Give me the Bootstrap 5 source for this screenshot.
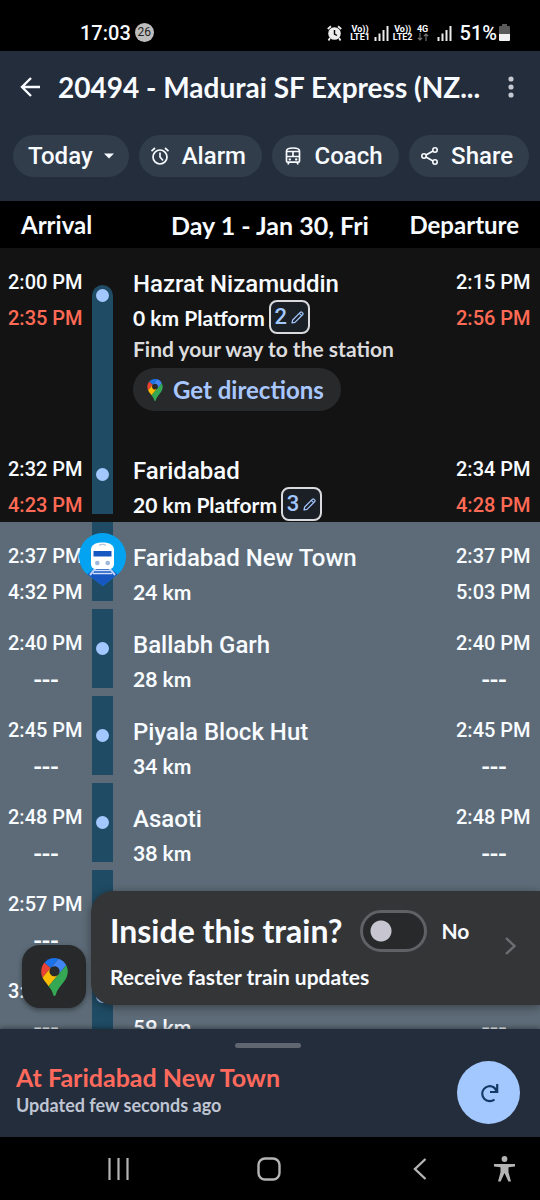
<!DOCTYPE html>
<html lang="en">
<head>
<meta charset="utf-8">
<meta name="viewport" content="width=device-width, initial-scale=1">
<title>20494 - Madurai SF Express</title>
<link href="https://cdn.jsdelivr.net/npm/bootstrap@5.3.0/dist/css/bootstrap.min.css" rel="stylesheet">
<style>
  :root { --f-round: Lato, "Open Sans", sans-serif; --f-flat: Roboto, "Noto Sans", sans-serif; }
  body { background: #000; color: #f8fbff; font-family: var(--f-flat); font-weight: 500; }
  svg { display: block; flex: none; }
  button { font-family: inherit; }

  .status-bar { height: 51px; padding: 14px 30px 0 80px; font-size: 20px; line-height: 36px; }
  .notif-count { width: 19px; height: 19px; font-size: 12px; line-height: 19px; font-weight: 400; background: #bdbdbd; color: #222; }
  .net-label { font-size: 9px; line-height: 8px; font-weight: 700; }
  .battery { margin-left: 2px; }

  .app-bar { background: #242d3c; height: 150px; padding-top: 18px; }
  .train-title { font: 700 28px/36px var(--f-round); }
  .plain-btn { background: none; border: 0; padding: 0; color: inherit; }
  .chips { gap: 10px; padding: 0 11px 0 13px; margin-top: 30px; }
  .chip { background: #313d4b; color: #f8fbff; border: 0; border-radius: 21px; height: 42px; font-size: 24px; line-height: 42px; white-space: nowrap; padding: 0 16px 0 11px; font-weight: 500; }
  .chip-day { padding: 0 15px; }

  .col-heads { height: 47px; background: #000; font: 700 24px/48px var(--f-round); padding: 0 21px; }
  .col-side { flex: 1 1 0; }
  .day-head { font-size: 25px; }

  .timeline { background: #5c6b77; min-height: 0; }
  .stop { height: 87px; padding: 0 8px; }
  .stop-passed { background: #131313; }
  .stop-first { height: 187px; }
  .stop-time { width: 76px; padding-top: 16px; font-size: 20px; line-height: 36px; white-space: nowrap; }
  .no-data { font: 600 26px/34px "Open Sans", sans-serif; text-align: center; }
  .late { color: #ff6a55; }
  .track { width: 21px; height: 79px; background: #1f4b64; }
  .stop-first .track { height: 150px; margin-top: 37px; border-radius: 11px 11px 0 0; }
  .dot { width: 13px; height: 13px; background: #a3c8ff; margin: 33px auto 0; }
  .stop-first .dot { margin-top: 4px; }
  .train-pin { left: -13px; top: 11px; }
  .stop-body { padding: 18px 0 0 12px; }
  .stop-name { font-size: 24px; line-height: 36px; white-space: nowrap; }
  .stop-dist { font: 700 21px/32px var(--f-round); white-space: nowrap; }
  .platform { height: 34px; width: 41px; background: #1b2027; border: 2px solid #d8dade; border-radius: 8px; color: #a3c8ff; font: 500 22px/30px var(--f-flat); padding: 0; margin: -2px 0 0 4px; }
  .hint { font: 700 21px/30px var(--f-round); color: #dcdcde; }
  .directions { width: 208px; height: 43px; border: 0; border-radius: 22px; background: #28292b; color: #a9c7ff; font: 700 24px/43px var(--f-round); padding: 0 0 0 14px; white-space: nowrap; margin-top: 4px; gap: 10px; }

  .map-btn { left: 22px; bottom: 21px; width: 64px; height: 63px; border: 0; border-radius: 18px; background: #28292b; box-shadow: 0 2px 5px #0006; }
  .inside-card { left: 91px; right: 0; bottom: 24px; height: 114px; padding: 19px 20px 0 19px; background: #343537; border-radius: 22px 0 0 22px; box-shadow: 0 2px 10px #0006; }
  .inside-title { font: 700 32px/42px var(--f-round); white-space: nowrap; }
  .inside-sub { font: 700 21px/30px var(--f-round); margin-top: 10px; }
  .inside-switch.form-check-input { width: 67px; height: 42px; margin: 0 0 0 18px; border: 3px solid #5f6164; border-radius: 21px; background: radial-gradient(circle at 18px 50%, #c6c5d0 10px, transparent 11px) #28292b; }
  .no-label { font: 700 21px/42px var(--f-round); margin-left: 14px; }
  .chev { right: 23px; top: 45px; }

  .sheet { background: #242d3c; height: 108px; padding: 14px 20px 0 16px; box-shadow: 0 -1px 5px #0006; z-index: 2; }
  .grab { width: 66px; height: 5px; background: #60666f; }
  .sheet-row { margin-top: 13px; }
  .sheet-title { font: 700 25px/32px var(--f-round); color: #ff6a5c; }
  .sheet-sub { font: 700 18px/24px var(--f-round); color: #bfc5d2; }
  .refresh { width: 63px; height: 63px; border: 0; background: #a3c8ff; }
  .sys-nav { height: 63px; padding: 0 25px 0 106px; gap: 62px; }
  .sys-nav svg { margin: 0 auto; }
  .nav-key { width: 24px; }
</style>
</head>
<body>
<svg class="d-none" xmlns="http://www.w3.org/2000/svg">
  <symbol id="gpin" viewBox="0 0 92.4 132.4">
    <path fill="#1a73e8" d="M60.2 2.2C55.8.8 51 0 46.1 0 32 0 19.3 6.4 10.8 16.5l21.8 18.3L60.2 2.2z"/>
    <path fill="#ea4335" d="M10.8 16.5C4.1 24.5 0 34.9 0 46.1c0 8.7 1.7 15.7 4.6 22l28-33.3-21.8-18.3z"/>
    <path fill="#4285f4" d="M46.2 28.5c9.8 0 17.7 7.9 17.7 17.7 0 4.3-1.6 8.3-4.2 11.4 0 0 13.9-16.6 27.5-32.7-5.6-10.8-15.3-19-27-22.7L32.6 34.8c3.3-3.8 8.1-6.3 13.6-6.3"/>
    <path fill="#fbbc04" d="M46.2 63.8c-9.8 0-17.7-7.9-17.7-17.7 0-4.3 1.5-8.3 4.1-11.3l-28 33.3c4.8 10.6 12.8 19.2 21 29.9l34.1-40.5c-3.3 3.9-8.1 6.3-13.5 6.3"/>
    <path fill="#34a853" d="M59.1 109.2c15.4-24.1 33.3-35 33.3-63 0-7.7-1.9-14.9-5.2-21.3L25.6 98c2.6 3.4 5.3 7.3 7.9 11.3 9.4 14.5 6.8 23.1 12.8 23.1s3.4-8.7 12.8-23.2"/>
  </symbol>
  <symbol id="bars" viewBox="0 0 15 16">
    <path d="M1.5 12v4M5.5 8.500v7.500M9.500 5v11M13.500 1v15" stroke="#ececec" stroke-width="2" fill="none"/>
  </symbol>
  <symbol id="pencil" viewBox="0 0 13 13">
    <path d="M1 12l.7-3L9.500 1.200a1 1 0 0 1 1.300 0l1 1a1 1 0 0 1 0 1.300L4 11.300zM8.300 2.400l2.300 2.300" fill="none" stroke="#a3c8ff" stroke-width="1.200" stroke-linejoin="round"/>
  </symbol>
</svg>

<div class="d-flex flex-column vh-100 overflow-hidden">
  <div class="status-bar d-flex align-items-center flex-shrink-0">
    <span>17:03</span>
    <span class="notif-count rounded-circle text-center ms-1">26</span>
    <span class="d-flex align-items-center ms-auto">
      <svg width="15" height="16" viewBox="0 0 15 16"><circle cx="7.500" cy="8.500" r="6.300" fill="#ececec"/><path d="M.8 4L4 1.200M14.200 4L11 1.200M3 13l-1.500 2.500M12 13l1.500 2.500" stroke="#ececec" stroke-width="1.800"/><path d="M7.500 5v4l2.500 1.500" fill="none" stroke="#000" stroke-width="1.400"/></svg>
      <span class="net-label text-center ms-2">Vo))<br>LTE1</span>
      <svg class="ms-1" width="15" height="16"><use href="#bars"/></svg>
      <span class="net-label text-center ms-1">Vo))<br>LTE2</span>
      <span class="net-label text-center ms-1">4G<svg class="mx-auto" width="12" height="8" viewBox="0 0 12 8"><path d="M3 0v7M.8 4.800L3 7l2.200-2.200M9 8V1M6.800 3.200L9 1l2.200 2.200" fill="none" stroke="#777" stroke-width="1.100"/></svg></span>
      <svg class="ms-2" width="15" height="16"><use href="#bars"/></svg>
      <span class="ms-2">51%</span>
      <svg class="battery" width="11" height="17" viewBox="0 0 11 17"><path d="M3 0h5v2h2a1 1 0 0 1 1 1v7H0V3a1 1 0 0 1 1-1h2z" fill="#5a5a5a"/><path d="M0 10h11v6a1 1 0 0 1-1 1H1a1 1 0 0 1-1-1z" fill="#f2f2f2"/></svg>
    </span>
  </div>

  <header class="app-bar flex-shrink-0">
    <div class="d-flex align-items-center">
      <button class="plain-btn ps-3 ms-1" aria-label="Back"><svg width="22" height="22" viewBox="0 0 22 22"><path d="M20 11H2M11 2L2 11l9 9" fill="none" stroke="#f8fbff" stroke-width="2.400"/></svg></button>
      <h1 class="train-title mb-0 ms-3 text-nowrap flex-grow-1">20494 - Madurai SF Express (NZ...</h1>
      <button class="plain-btn pe-4" aria-label="More"><svg width="10" height="22" viewBox="0 0 10 22"><g fill="#c4c9d2"><circle cx="5" cy="3" r="2.600"/><circle cx="5" cy="11" r="2.600"/><circle cx="5" cy="19" r="2.600"/></g></svg></button>
    </div>
    <div class="chips d-flex">
      <button class="chip chip-day d-flex align-items-center justify-content-between flex-fill"><span>Today</span><svg width="10" height="6" viewBox="0 0 10 6"><path d="M0 .5h10L5 5.500z" fill="#f8fbff"/></svg></button>
      <button class="chip d-flex align-items-center justify-content-between flex-fill"><svg width="20" height="20" viewBox="0 0 20 20"><g fill="none" stroke="#f8fbff" stroke-width="1.700"><circle cx="10" cy="11" r="7"/><path d="M10 6.500V11l3 3.500M1.500 5.200L5 2M18.500 5.200L15 2"/></g></svg><span>Alarm</span></button>
      <button class="chip d-flex align-items-center justify-content-between flex-fill"><svg width="20" height="20" viewBox="0 0 20 20"><g fill="none" stroke="#f8fbff" stroke-width="1.700"><path d="M3.500 15V5C3.500 2.800 6 2 10 2s6.500.8 6.500 3v10c0 .8-.5 1.200-1.200 1.200H4.700c-.7 0-1.200-.4-1.200-1.200zM3.500 5.500h13M3.500 10.500h13M10 5.500v5M6 16.200l-1 2.300M14 16.200l1 2.300"/></g><circle cx="6.800" cy="13.400" r="1.200" fill="#f8fbff"/><circle cx="13.200" cy="13.400" r="1.200" fill="#f8fbff"/></svg><span>Coach</span></button>
      <button class="chip d-flex align-items-center justify-content-between flex-fill"><svg width="20" height="20" viewBox="0 0 20 20"><g fill="none" stroke="#f8fbff" stroke-width="1.600"><circle cx="4" cy="10" r="2.200"/><circle cx="15" cy="4" r="2.200"/><circle cx="15" cy="16" r="2.200"/><path d="M6 9l7-4M6 11l7 4"/></g></svg><span>Share</span></button>
    </div>
  </header>

  <div class="col-heads d-flex flex-shrink-0">
    <span class="col-side">Arrival</span><span class="day-head">Day 1 - Jan 30, Fri</span><span class="col-side text-end">Departure</span>
  </div>

  <main class="timeline flex-grow-1 position-relative overflow-hidden">
    <div class="stop stop-passed stop-first d-flex gap-2">
      <div class="stop-time">2:00 PM<div class="late">2:35 PM</div></div>
      <div class="track"><div class="dot rounded-circle"></div></div>
      <div class="stop-body flex-grow-1">
        <div class="stop-name">Hazrat Nizamuddin</div>
        <div class="stop-dist d-flex align-items-center"><span>0 km Platform</span><button class="platform d-flex align-items-center justify-content-center gap-1" aria-label="Edit platform"><span>2</span><svg width="13" height="13"><use href="#pencil"/></svg></button></div>
        <div class="hint">Find your way to the station</div>
        <button class="directions d-flex align-items-center"><svg width="16" height="22"><use href="#gpin"/></svg><span>Get directions</span></button>
      </div>
      <div class="stop-time">2:15 PM<div class="late">2:56 PM</div></div>
    </div>
    <div class="stop stop-passed d-flex gap-2">
      <div class="stop-time">2:32 PM<div class="late">4:23 PM</div></div>
      <div class="track"><div class="dot rounded-circle"></div></div>
      <div class="stop-body flex-grow-1">
        <div class="stop-name">Faridabad</div>
        <div class="stop-dist d-flex align-items-center"><span>20 km Platform</span><button class="platform d-flex align-items-center justify-content-center gap-1" aria-label="Edit platform"><span>3</span><svg width="13" height="13"><use href="#pencil"/></svg></button></div>
      </div>
      <div class="stop-time">2:34 PM<div class="late">4:28 PM</div></div>
    </div>
    <div class="stop d-flex gap-2">
      <div class="stop-time">2:37 PM<div>4:32 PM</div></div>
      <div class="track position-relative">
        <svg class="train-pin position-absolute" width="47" height="54" viewBox="0 0 47 54">
          <defs><clipPath id="pinClip"><path d="M23.500 0a23.500 23.500 0 0 1 12 43.700L24 53 11.500 43.700A23.500 23.500 0 0 1 23.500 0z"/></clipPath></defs>
          <g clip-path="url(#pinClip)">
            <path d="M0 0h47v54H0z" fill="#03a3f2"/>
            <path d="M15 35.500h17l9 8L24 54 6 43.500z" fill="#1757c2"/>
            <path d="M16 37.500h15M14 40.500h19" stroke="#cfe0fb" stroke-width="1.600"/><path d="M16.500 35.500L11 42M30.500 35.500l5.500 6.500" stroke="#b9d2fb" stroke-width="2"/>
          </g>
          <path d="M12 17c0-5 4-7.500 11.500-7.500S35 12 35 17v14c0 3-2 5-5 5H17c-3 0-5-2-5-5z" fill="#fff"/>
          <path d="M20 12.500c1.500-1.500 5.500-1.500 7 0" fill="none" stroke="#b8c6da" stroke-width="1.400"/>
          <path d="M14.500 18h18v5.500h-18z" fill="#1757c2"/><circle cx="18.300" cy="30" r="2.300" fill="#9db7df"/><circle cx="28.700" cy="30" r="2.300" fill="#9db7df"/>
        </svg>
      </div>
      <div class="stop-body flex-grow-1"><div class="stop-name">Faridabad New Town</div><div class="stop-dist">24 km</div></div>
      <div class="stop-time">2:37 PM<div>5:03 PM</div></div>
    </div>
    <div class="stop d-flex gap-2">
      <div class="stop-time">2:40 PM<div class="no-data">---</div></div>
      <div class="track"><div class="dot rounded-circle"></div></div>
      <div class="stop-body flex-grow-1"><div class="stop-name">Ballabh Garh</div><div class="stop-dist">28 km</div></div>
      <div class="stop-time">2:40 PM<div class="no-data">---</div></div>
    </div>
    <div class="stop d-flex gap-2">
      <div class="stop-time">2:45 PM<div class="no-data">---</div></div>
      <div class="track"><div class="dot rounded-circle"></div></div>
      <div class="stop-body flex-grow-1"><div class="stop-name">Piyala Block Hut</div><div class="stop-dist">34 km</div></div>
      <div class="stop-time">2:45 PM<div class="no-data">---</div></div>
    </div>
    <div class="stop d-flex gap-2">
      <div class="stop-time">2:48 PM<div class="no-data">---</div></div>
      <div class="track"><div class="dot rounded-circle"></div></div>
      <div class="stop-body flex-grow-1"><div class="stop-name">Asaoti</div><div class="stop-dist">38 km</div></div>
      <div class="stop-time">2:48 PM<div class="no-data">---</div></div>
    </div>
    <div class="stop d-flex gap-2">
      <div class="stop-time">2:57 PM<div class="no-data">---</div></div>
      <div class="track"><div class="dot rounded-circle"></div></div>
    </div>
    <div class="stop d-flex gap-2">
      <div class="stop-time">3:<div class="no-data">---</div></div>
      <div class="track"><div class="dot rounded-circle"></div></div>
      <div class="stop-body flex-grow-1"><div class="stop-name">&nbsp;</div><div class="stop-dist">59 km</div></div>
      <div class="stop-time">&nbsp;<div class="no-data">---</div></div>
    </div>

    <button class="map-btn position-absolute d-flex align-items-center justify-content-center" aria-label="Map"><svg width="27" height="38"><use href="#gpin"/></svg></button>
    <section class="inside-card position-absolute">
      <div class="d-flex align-items-center">
        <label class="inside-title" for="inside">Inside this train?</label>
        <input class="inside-switch form-check-input flex-shrink-0" type="checkbox" role="switch" id="inside">
        <span class="no-label">No</span>
      </div>
      <div class="inside-sub">Receive faster train updates</div>
      <svg class="chev position-absolute" width="13" height="20" viewBox="0 0 13 20"><path d="M2 2l8.500 8L2 18" fill="none" stroke="#6d6e71" stroke-width="2.400"/></svg>
    </section>
  </main>

  <section class="sheet position-relative flex-shrink-0">
    <div class="grab mx-auto rounded-pill"></div>
    <div class="sheet-row d-flex justify-content-between">
      <div><div class="sheet-title">At Faridabad New Town</div><div class="sheet-sub">Updated few seconds ago</div></div>
      <button class="refresh rounded-circle d-flex align-items-center justify-content-center" aria-label="Refresh"><svg width="20" height="20" viewBox="0 0 20 20"><path d="M15.500 16.500A7.500 7.500 0 1 1 15 4.500Q17 6 17.500 8.500M18.200 1v8H11" fill="none" stroke="#123a66" stroke-width="2.200"/></svg></button>
    </div>
  </section>

  <nav class="sys-nav d-flex align-items-center flex-shrink-0">
    <div class="d-flex align-items-center justify-content-between flex-grow-1">
      <button class="plain-btn nav-key" aria-label="Recents"><svg width="21" height="22" viewBox="0 0 21 22"><path d="M1.500 0v22M10.500 0v22M19.500 0v22" stroke="#b4b4b4" stroke-width="2.200"/></svg></button>
      <button class="plain-btn nav-key" aria-label="Home"><svg width="24" height="24" viewBox="0 0 24 24"><rect x="1.500" y="1.500" width="21" height="21" rx="6.500" fill="none" stroke="#b4b4b4" stroke-width="2.400"/></svg></button>
      <button class="plain-btn nav-key" aria-label="Back"><svg width="14" height="22" viewBox="0 0 14 22"><path d="M12.500 1L2 11l10.500 10" fill="none" stroke="#b4b4b4" stroke-width="2.400"/></svg></button>
    </div>
    <button class="plain-btn" aria-label="Accessibility"><svg width="21" height="26" viewBox="0 0 21 26"><circle cx="10.500" cy="3" r="2.900" fill="#b4b4b4"/><path d="M0 8h21v2.400l-6.500.8v5L17 25.500h-2.600L10.500 17l-3.900 8.500H4l2.500-9.300v-5L0 10.400z" fill="#b4b4b4"/></svg></button>
  </nav>
</div>
<script src="https://cdn.jsdelivr.net/npm/bootstrap@5.3.0/dist/js/bootstrap.bundle.min.js"></script>
</body>
</html>
